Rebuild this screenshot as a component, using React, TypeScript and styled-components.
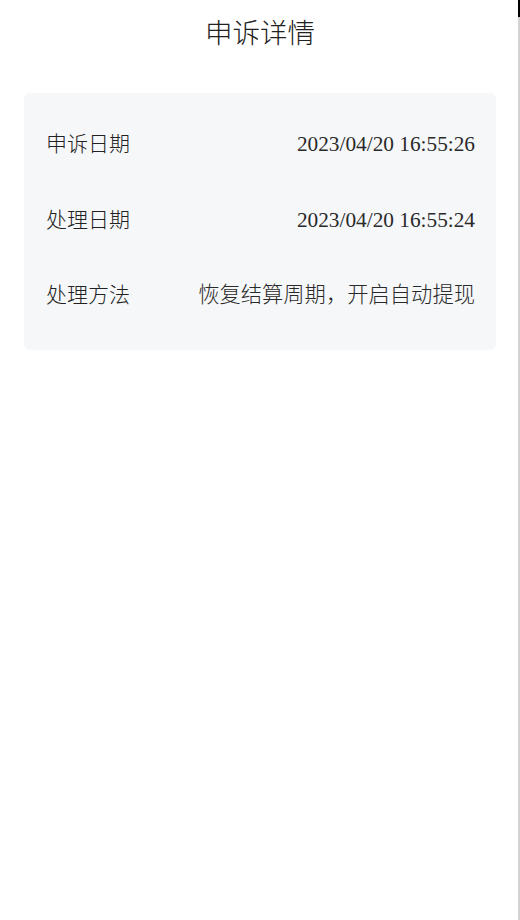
import styled, { createGlobalStyle } from 'styled-components'

interface Item {
  label: string,
  value: string
}

const items: Item[] = [
  { label: '申诉日期', value: '2023/04/20 16:55:26' },
  { label: '处理日期', value: '2023/04/20 16:55:24' },
  { label: '处理方法', value: '恢复结算周期，开启自动提现' }
]

export default function App() {
  return (
    <>
      <GlobalStyle />
      <Frame>
        <Page>
          <Title>申诉详情</Title>
          <Card>
            {items.map(item => (
              <Row key={item.label}>
                <Label>{item.label}</Label>
                <Value>{item.value}</Value>
              </Row>
            ))}
          </Card>
        </Page>
        <Edge />
      </Frame>
    </>
  )
}

const GlobalStyle = createGlobalStyle`
  html, body {
    margin: 0;
    padding: 0;
    background: #fff;
  }
  body {
    font-family: "Liberation Serif", "Noto Sans CJK SC", serif;
    color: #333;
  }
`

const Frame = styled.div`
  display: flex;
  min-height: 100vh;
`

const Page = styled.main`
  flex: 1;
  padding: 0 22px 0 24px;
`

const Edge = styled.div`
  width: 2px;
  background: linear-gradient(#000 0 17px, #d2d2d2 17px);
`

const Title = styled.h1`
  margin: 0;
  height: 62px;
  line-height: 62px;
  text-align: center;
  font-family: "Noto Sans CJK SC", sans-serif;
  font-size: 27.5px;
  font-weight: 300;
  color: #222;
`

const Card = styled.section`
  margin-top: 31px;
  padding: 12px 21px 18.5px 22px;
  background: #f6f7f9;
  border-radius: 6px;
`

const Row = styled.div`
  box-sizing: border-box;
  display: flex;
  align-items: baseline;
  justify-content: space-between;
  height: 75.5px;
  padding-top: 27px;
  font-size: 21.3px;
  line-height: 1;
`

const Label = styled.span`
  font-family: "Noto Sans CJK SC", sans-serif;
  font-size: 21px;
  font-weight: 300;
  color: #222;
`

const Value = styled.span`
  font-weight: 300;
  color: #2a2a2a;
  text-align: right;
`
